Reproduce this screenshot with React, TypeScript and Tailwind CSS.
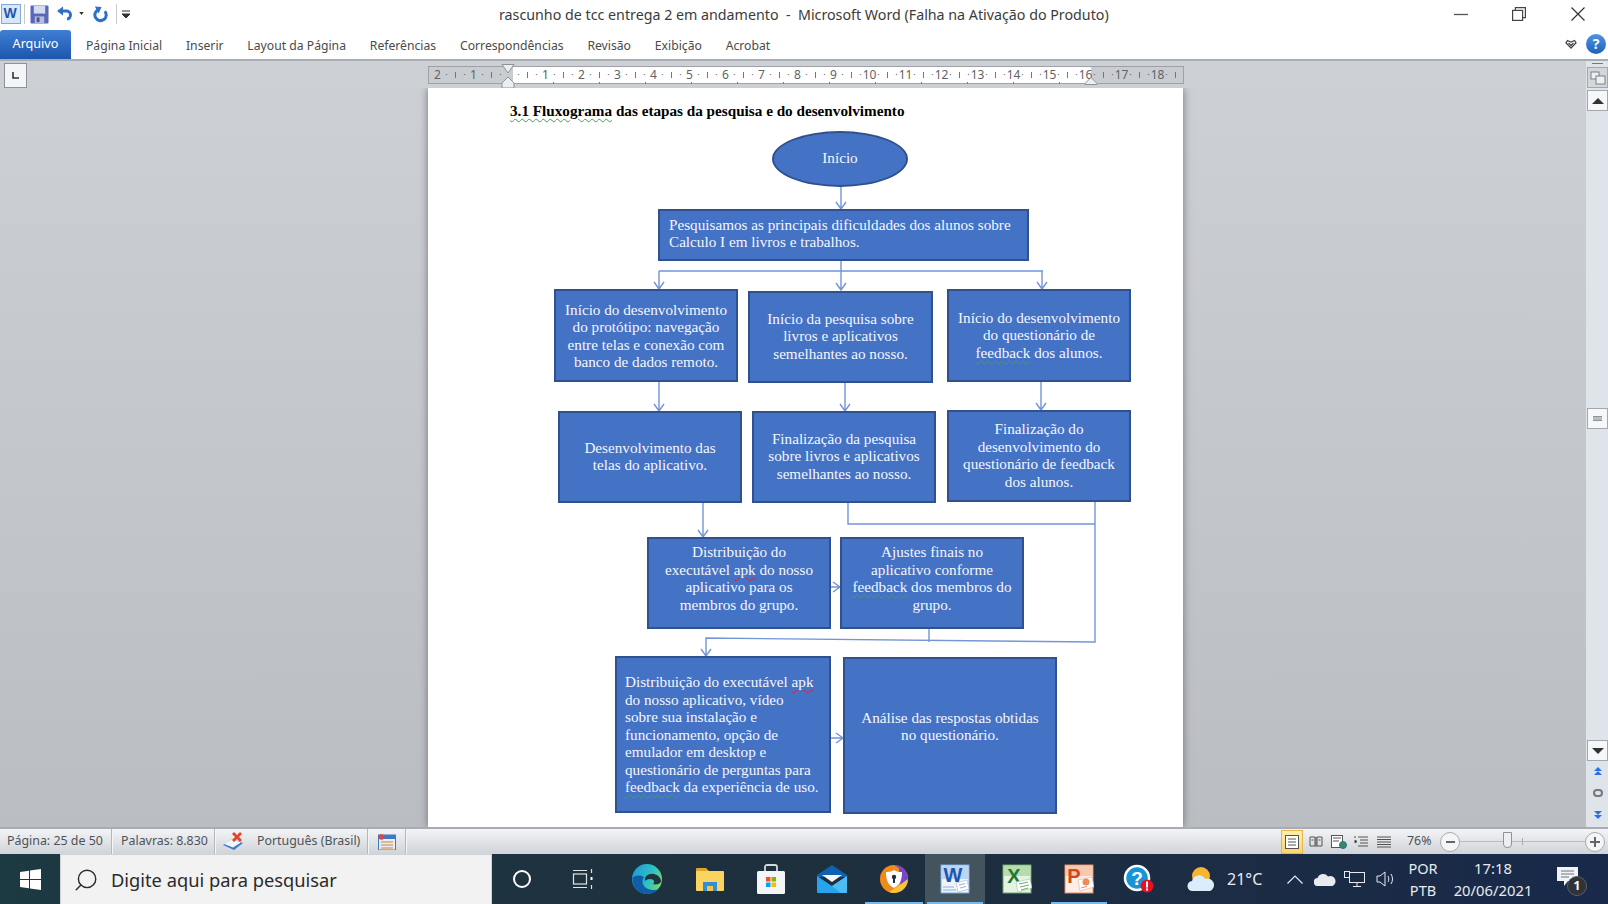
import type { ReactNode } from "react";
import { Search } from "lucide-react";

const uiFont = "font-['Noto_Sans',sans-serif]";

const tabs = ["Página Inicial", "Inserir", "Layout da Página", "Referências", "Correspondências", "Revisão", "Exibição", "Acrobat"];
const rulerLabels = ["2", "1", "", "1", "2", "3", "4", "5", "6", "7", "8", "9", "10", "11", "12", "13", "14", "15", "16", "17", "18"];
const tabStops = [0, 1, 2, 3, 4, 5, 6, 7, 8, 9, 10, 11];

function WordIcon() {
  return (
    <svg viewBox="0 0 30 30" className="w-[30px] h-[30px]">
      <rect x="1" y="1" width="28" height="28" fill="#eef4fb" stroke="#7ba6dc" />
      <rect x="2" y="2" width="26" height="13" fill="#bcd5f2" />
      <text x="13" y="18" textAnchor="middle" fontSize="20" fontWeight="700" fill="#1f56ad" fontFamily="Liberation Sans, sans-serif">W</text>
      <path d="M16 19l11-3 2 9-11 3z" fill="#fff" stroke="#9db4d0" strokeWidth="0.6" />
      <path d="M3 23h11M3 26h13M19 21l6-1.500M20 24l6-1.500" stroke="#7b9ccb" strokeWidth="0.8" />
    </svg>
  );
}

function ExcelIcon() {
  return (
    <svg viewBox="0 0 30 30" className="w-[30px] h-[30px]">
      <rect x="1" y="1" width="28" height="28" fill="#e6f3e2" stroke="#66a65c" />
      <rect x="2" y="2" width="26" height="10" fill="#b7dcae" />
      <text x="12" y="19" textAnchor="middle" fontSize="20" fontWeight="700" fill="#1d7a37" fontFamily="Liberation Sans, sans-serif">X</text>
      <path d="M14 18l14-3 2 9-14 4z" fill="#fff" stroke="#9cc297" strokeWidth="0.6" />
      <path d="M17 20l9-2M18 23l9-2M19 26l7-2" stroke="#5da463" strokeWidth="0.9" />
    </svg>
  );
}

function PowerPointIcon() {
  return (
    <svg viewBox="0 0 30 30" className="w-[30px] h-[30px]">
      <rect x="1" y="1" width="28" height="28" fill="#fdeee6" stroke="#e98a5e" />
      <rect x="2" y="2" width="26" height="10" fill="#f9c8ad" />
      <text x="10" y="19" textAnchor="middle" fontSize="20" fontWeight="700" fill="#d2471c" fontFamily="Liberation Sans, sans-serif">P</text>
      <path d="M14 16l14-3 2 10-14 4z" fill="#fff" stroke="#d8ab95" strokeWidth="0.6" />
      <circle cx="22" cy="18" r="3.500" fill="#ef8b55" />
      <path d="M17 24l6-1.500" stroke="#e48e62" strokeWidth="1" />
    </svg>
  );
}

function EdgeIcon() {
  return (
    <svg viewBox="0 0 32 32" className="w-[32px] h-[32px]">
      <defs>
        <linearGradient id="edgeTop" x1="0" y1="0.2" x2="1" y2="0.6">
          <stop offset="0" stopColor="#1b9bd7" />
          <stop offset="0.6" stopColor="#2fc0c4" />
          <stop offset="1" stopColor="#6edb6a" />
        </linearGradient>
      </defs>
      <circle cx="16" cy="16" r="15" fill="url(#edgeTop)" />
      <path d="M1.500 15C1 25 8 31 16 31c5 0 9-2 12-5-5 2-12 1-15-3-2-3-2-6 0-9-4-2-8-2-11.500 1z" fill="#0f5fa8" />
      <path d="M14 18c-1-5 4-8 9-7 4 1 7 4 7 7 0 3-5 4-8 3 2-2 1-5-3-5-3 0-4 1-5 2z" fill="#1e3440" />
    </svg>
  );
}

function FolderIcon() {
  return (
    <svg viewBox="0 0 30 26" className="w-[30px] h-[26px]">
      <path d="M1 3a1 1 0 0 1 1-1h9l3 3v4H1z" fill="#e0a526" />
      <rect x="1" y="5" width="28" height="20" rx="1" fill="#fbd460" />
      <path d="M8 25v-9h14v9h-4v-5h-6v5z" fill="#2f8fdc" />
      <rect x="12" y="20" width="6" height="5" fill="#f6c445" />
    </svg>
  );
}

function StoreIcon() {
  return (
    <svg viewBox="0 0 30 32" className="w-[30px] h-[32px]">
      <path d="M9 10V4a2 2 0 0 1 2-2h8a2 2 0 0 1 2 2v6" fill="none" stroke="#d5d8da" strokeWidth="1.800" />
      <rect x="1" y="8" width="28" height="23" rx="1.500" fill="#f4f5f6" />
      <rect x="10" y="14" width="4.500" height="4.500" fill="#f25022" />
      <rect x="15.500" y="14" width="4.500" height="4.500" fill="#7fba00" />
      <rect x="10" y="19.500" width="4.500" height="4.500" fill="#00a4ef" />
      <rect x="15.500" y="19.500" width="4.500" height="4.500" fill="#ffb900" />
    </svg>
  );
}

function MailIcon() {
  return (
    <svg viewBox="0 0 32 30" className="w-[32px] h-[30px]">
      <path d="M1 11 16 1l15 10v2H1z" fill="#0f62b0" />
      <path d="M6 11h20l-10 7z" fill="#f4f6f8" />
      <path d="M1 12l15 10 15-10v16a1 1 0 0 1-1 1H2a1 1 0 0 1-1-1z" fill="#27a5ec" />
      <path d="M16 22l15-10v16a1 1 0 0 1-1 1h-5z" fill="#4dbcf2" />
    </svg>
  );
}

function AvastIcon() {
  return (
    <svg viewBox="0 0 30 30" className="w-[30px] h-[30px]">
      <circle cx="15" cy="15" r="14" fill="#f18a1c" />
      <path d="M15 1a14 14 0 0 1 14 14c0 4-2 8-5 10l-4-8V4z" fill="#7a45c8" />
      <path d="M29 15a14 14 0 0 1-19 13l8-5z" fill="#f5c63a" />
      <path d="M15 6c3 2 6 2 8 2 0 8-2 13-8 16-6-3-8-8-8-16 2 0 5 0 8-2z" fill="#fff" />
      <circle cx="15" cy="13" r="2.200" fill="#2e2e3a" />
      <rect x="14" y="14" width="2" height="5" fill="#2e2e3a" />
    </svg>
  );
}

function HelpAlertIcon() {
  return (
    <svg viewBox="0 0 32 30" className="w-[32px] h-[30px]">
      <circle cx="14" cy="14" r="12" fill="#1794d8" stroke="#fff" strokeWidth="2.500" />
      <text x="14" y="21" textAnchor="middle" fontSize="19" fontWeight="700" fill="#fff" fontFamily="Liberation Sans, sans-serif">?</text>
      <circle cx="24" cy="22" r="6.500" fill="#e81123" />
      <rect x="23" y="17.500" width="2" height="6" fill="#fff" />
      <rect x="23" y="24.500" width="2" height="2" fill="#fff" />
    </svg>
  );
}

function WeatherIcon() {
  return (
    <svg viewBox="0 0 28 26" className="w-[28px] h-[26px]">
      <circle cx="14" cy="10" r="9" fill="#f6b52e" />
      <path d="M6 25a5 5 0 0 1-1-10 7 7 0 0 1 13-2 6 6 0 0 1 5 12z" fill="#d9edfb" />
    </svg>
  );
}

function Node({ className, children }: { className: string; children: ReactNode }) {
  return (
    <div className={`absolute flex flex-col justify-center bg-[#4472c4] border-2 border-[#2f528f] text-[#f4f7fd] text-[15.200px] leading-[17.5px] ${className}`}>
      {children}
    </div>
  );
}

function Green({ children }: { children: ReactNode }) {
  return <span className="underline decoration-wavy decoration-[#3fa34d] decoration-1 underline-offset-2">{children}</span>;
}

function Red({ children }: { children: ReactNode }) {
  return <span className="underline decoration-wavy decoration-[#d9233a] decoration-1 underline-offset-2">{children}</span>;
}

function Connectors() {
  const lines = [
    "M413 98V121M408 114l5 7 5-7",
    "M413 172V202M408 195l5 7 5-7",
    "M231 183H615",
    "M231 183V201M226 194l5 7 5-7",
    "M614 183V201M609 194l5 7 5-7",
    "M231 294V323M226 316l5 7 5-7",
    "M417 295V323M412 316l5 7 5-7",
    "M613 294V322M608 315l5 7 5-7",
    "M275 415V449M270 442l5 7 5-7",
    "M420 415V436H667",
    "M667 414V554L278 550V568M273 561l5 7 5-7",
    "M501 541V554",
    "M403 499H412M405 494l7 5-7 5",
    "M403 650H415M408 645l7 5-7 5",
  ];
  return (
    <svg className="absolute inset-0 w-full h-full pointer-events-none" fill="none" stroke="#7395da" strokeWidth="1.400">
      {lines.map((d) => (
        <path key={d} d={d} />
      ))}
    </svg>
  );
}

function Flowchart() {
  return (
    <div className="relative w-[755px] h-[739px] shrink-0 bg-white font-['Liberation_Serif',serif] shadow-[0_0_8px_#6f7277]">
      <p className="absolute left-[82px] top-[14px] text-[15.200px] leading-[18px] font-bold text-black whitespace-nowrap">
        <Green>3.1 Fluxograma</Green> das etapas da pesquisa e do desenvolvimento
      </p>
      <Connectors />
      <Node className="left-[344px] top-[43px] w-[136px] h-[56px] pb-[2px] rounded-[50%] items-center text-center">Início</Node>
      <Node className="left-[230px] top-[121px] w-[371px] h-[52px] pl-[9px] pb-[4px]">
        <p>Pesquisamos as principais dificuldades dos alunos sobre</p>
        <p>Calculo I em livros e trabalhos.</p>
      </Node>

      <Node className="left-[126px] top-[201px] w-[184px] h-[93px] text-center">
        <p>Início do desenvolvimento</p>
        <p>do protótipo: navegação</p>
        <p>entre telas e conexão com</p>
        <p>banco de dados remoto.</p>
      </Node>
      <Node className="left-[320px] top-[203px] w-[185px] h-[92px] pb-[2px] text-center">
        <p>Início da pesquisa sobre</p>
        <p>livros e aplicativos</p>
        <p>semelhantes ao nosso.</p>
      </Node>
      <Node className="left-[519px] top-[201px] w-[184px] h-[93px] pb-[1px] text-center">
        <p>Início do desenvolvimento</p>
        <p>do questionário de</p>
        <p><Green>feedback</Green> dos alunos.</p>
      </Node>

      <Node className="left-[130px] top-[323px] w-[184px] h-[92px] pb-[2px] text-center">
        <p>Desenvolvimento das</p>
        <p>telas do aplicativo.</p>
      </Node>
      <Node className="left-[324px] top-[323px] w-[184px] h-[92px] pb-[2px] text-center">
        <p>Finalização da pesquisa</p>
        <p>sobre livros e aplicativos</p>
        <p>semelhantes ao nosso.</p>
      </Node>
      <Node className="left-[519px] top-[322px] w-[184px] h-[92px] pb-[2px] text-center">
        <p>Finalização do</p>
        <p>desenvolvimento do</p>
        <p>questionário de feedback</p>
        <p>dos alunos.</p>
      </Node>

      <Node className="left-[219px] top-[449px] w-[184px] h-[92px] pb-[10px] text-center">
        <p>Distribuição do</p>
        <p>executável <Red>apk</Red> do nosso</p>
        <p>aplicativo para os</p>
        <p>membros do grupo.</p>
      </Node>
      <Node className="left-[412px] top-[449px] w-[184px] h-[92px] pb-[10px] text-center">
        <p>Ajustes finais no</p>
        <p>aplicativo conforme</p>
        <p><Green>feedback</Green> dos membros do</p>
        <p>grupo.</p>
      </Node>

      <Node className="left-[187px] top-[568px] w-[216px] h-[157px] pl-[8px] whitespace-nowrap">
        <p>Distribuição do executável <Red>apk</Red></p>
        <p>do nosso aplicativo, vídeo</p>
        <p>sobre sua instalação e</p>
        <p>funcionamento, opção de</p>
        <p>emulador em desktop e</p>
        <p>questionário de perguntas para</p>
        <p><Green>feedback</Green> da experiência de uso.</p>
      </Node>
      <Node className="left-[415px] top-[569px] w-[214px] h-[157px] pb-[19px] text-center">
        <p>Análise das respostas obtidas</p>
        <p>no questionário.</p>
      </Node>
    </div>
  );
}

function TitleBar() {
  return (
    <div className="relative flex items-center h-[28px] shrink-0 bg-white">
      <svg viewBox="0 0 20 20" className="w-[20px] h-[20px] ml-[1px]">
        <rect x="0.500" y="0.500" width="19" height="19" fill="#d8e7f8" stroke="#82a9dc" />
        <text x="9" y="14" textAnchor="middle" fontSize="14" fontWeight="700" fill="#1f56ad" fontFamily="Liberation Sans, sans-serif">W</text>
      </svg>
      <div className="w-px h-[20px] bg-[#c8c8c8] ml-[3px]" />
      <svg viewBox="0 0 20 20" className="w-[19px] h-[19px] ml-[5px]">
        <rect x="0.500" y="0.500" width="19" height="19" rx="1" fill="#5a67b8" />
        <rect x="4" y="1" width="12" height="8" fill="#d5dcf2" />
        <rect x="5" y="12" width="10" height="7" fill="#b7bfd8" />
        <rect x="7" y="13" width="3" height="5" fill="#4a5490" />
      </svg>
      {/* desfazer */}
      <svg viewBox="0 0 16 16" className="w-[16px] h-[16px] ml-[8px]">
        <path d="M5 5h4a4 4 0 0 1 1 8" fill="none" stroke="#2f6fc6" strokeWidth="3" />
        <path d="M0 5l6-4.500v9z" fill="#2f6fc6" />
      </svg>
      <svg viewBox="0 0 6 4" className="w-[5px] h-[3px] ml-[6px] mt-[-2px]"><path d="M0 0h6L3 4z" fill="#333" /></svg>
      {/* refazer */}
      <svg viewBox="0 0 18 18" className="w-[17px] h-[17px] ml-[9px]">
        <path d="M12.500 5.500A6 6 0 1 1 5.500 4" fill="none" stroke="#2f6fc6" strokeWidth="3.200" />
        <path d="M2 .5 9 1 6 8z" fill="#2f6fc6" />
      </svg>
      <div className="w-px h-[20px] bg-[#c8c8c8] ml-[6px]" />
      <svg viewBox="0 0 8 8" className="w-[8px] h-[8px] ml-[5px]">
        <path d="M0 1h8M0 4h8L4 8z" stroke="#333" strokeWidth="1" fill="#333" />
      </svg>
      <span className={`absolute left-[499px] top-[5px] text-[14.250px] leading-[20px] text-[#3b3b3b] whitespace-pre ${uiFont}`}>
        rascunho de tcc entrega 2 em andamento  -  Microsoft Word (Falha na Ativação do Produto)
      </span>
      <div className="ml-auto flex items-center">
        <svg viewBox="0 0 14 14" className="w-[14px] h-[14px] mr-[44px]"><path d="M0 7.500h14" stroke="#555" strokeWidth="1.300" /></svg>
        <svg viewBox="0 0 14 14" className="w-[14px] h-[14px] mr-[45px]" fill="none" stroke="#444" strokeWidth="1.200">
          <rect x="0.600" y="3.400" width="10" height="10" />
          <path d="M3.400 3.400V.6h10v10h-2.800" />
        </svg>
        <svg viewBox="0 0 14 14" className="w-[14px] h-[14px] mr-[23px]" fill="none" stroke="#333" strokeWidth="1.200">
          <path d="M.5.5l13 13M13.500.5l-13 13" />
        </svg>
      </div>
    </div>
  );
}

function RibbonTabs() {
  return (
    <div className={`flex items-stretch h-[33px] shrink-0 bg-white border-b-2 border-[#a9adb3] ${uiFont}`}>
      <div className="mt-[2px] w-[71px] rounded-t-[3px] bg-gradient-to-b from-[#3f7fd3] to-[#1d56ad] flex items-center justify-center text-[12.600px] text-white">
        Arquivo
      </div>
      <div className="flex items-center gap-[23.800px] pl-[15px] pt-[5px] text-[12.200px] text-[#4a4a4a] whitespace-nowrap">
        {tabs.map((t) => (
          <span key={t}>{t}</span>
        ))}
      </div>
      <div className="ml-auto flex items-center pr-[2px]">
        <svg viewBox="0 0 12 10" className="w-[12px] h-[10px] mr-[9px]" fill="none" stroke="#444" strokeWidth="1.300">
          <path d="M6 9 1 4 2.500 1.500 6 3 9.500 1.500 11 4z" />
          <path d="M3.500 4 6 6.500 8.500 4" />
        </svg>
        <div className="w-[20px] h-[20px] rounded-full bg-gradient-to-b from-[#4f95e3] to-[#1e62b8] flex items-center justify-center text-[14px] font-bold text-white">?</div>
      </div>
    </div>
  );
}

function Ruler() {
  return (
    <div className="flex h-[27px] shrink-0 pt-[1px]">
      <div className="ml-[4px] mt-[1px] w-[23px] h-[25px] border border-[#8f9398] bg-[#f4f5f6] flex items-center justify-center">
        <svg viewBox="0 0 9 9" className="w-[9px] h-[9px]"><path d="M2 1v6h6" fill="none" stroke="#333" strokeWidth="1.600" /></svg>
      </div>
      <div className="relative ml-[401px] mt-[4px] w-[756px] h-[18px]">
        <div className={`w-full h-full border border-[#9ea2a7] overflow-hidden flex pl-[4px] text-[12px] leading-[16px] text-[#5f6368] bg-[linear-gradient(to_right,#c9cdd2_84px,#fff_84px,#fff_662px,#c9cdd2_662px)] ${uiFont}`}>
          {rulerLabels.map((label, i) => (
            <div key={i} className="grid grid-cols-4 w-[36px] shrink-0 text-center items-center">
              <span className="justify-self-center whitespace-nowrap">{label}</span>
              <span className="text-[9px]">·</span>
              <span className="w-px h-[6px] bg-[#777] justify-self-center" />
              {i < rulerLabels.length - 1 && <span className="text-[9px]">·</span>}
            </div>
          ))}
        </div>
        <div className="absolute left-[125px] bottom-0 flex gap-[45px]">
          {tabStops.map((i) => (
            <span key={i} className="w-px h-[2px] bg-[#777]" />
          ))}
        </div>
        {/* recuos da régua */}
        <svg viewBox="0 0 16 25" className="absolute left-[72px] top-[-2px] w-[16px] h-[25px]" fill="#eceef0" stroke="#8f9398">
          <path d="M2 .5h12L8 9z" />
          <path d="M8 13l6 6v5H2v-5z" />
        </svg>
        <svg viewBox="0 0 16 8" className="absolute left-[655px] top-[11px] w-[16px] h-[8px]" fill="#eceef0" stroke="#8f9398">
          <path d="M8 .5l6 6v1H2v-1z" />
        </svg>
      </div>
    </div>
  );
}

function Scrollbar() {
  const btn = "w-[21px] border border-[#a4a8ad] bg-[#f6f7f9] flex items-center justify-center";
  return (
    <div className="w-[22px] shrink-0 bg-[#dfe3ea] flex flex-col items-end">
      <div className="w-[11px] h-[1px] bg-[#777] mt-[2px] mr-[5px]" />
      <div className="w-[21px] h-[21px] mt-[3px] border border-[#a4a8ad] bg-[#d3d6db] flex items-center justify-center">
        <svg viewBox="0 0 16 14" className="w-[16px] h-[14px]" fill="#eeeff1" stroke="#71757a" strokeWidth="0.900">
          <rect x="1" y="1" width="8" height="7" />
          <rect x="6" y="5" width="9" height="8" />
        </svg>
      </div>
      <div className={`${btn} h-[21px] mt-[2px]`}>
        <svg viewBox="0 0 12 6" className="w-[12px] h-[6px]"><path d="M0 6 6 0l6 6z" fill="#333" /></svg>
      </div>
      <div className={`${btn} h-[21px] mt-[297px]`}>
        <div className="w-[9px] h-[5px] bg-[#b8bbbf] border-y border-[#8f9398]" />
      </div>
      <div className={`${btn} h-[21px] mt-[311px]`}>
        <svg viewBox="0 0 12 6" className="w-[12px] h-[6px]"><path d="M0 0h12L6 6z" fill="#333" /></svg>
      </div>
      <div className="w-[21px] flex flex-col items-center gap-[14px] mt-[6px]">
        <svg viewBox="0 0 8 8" className="w-[8px] h-[8px]" fill="#2b6fe6"><path d="M0 4 4 0l4 4zM0 8l4-4 4 4z" /></svg>
        <div className="w-[10px] h-[8px] rounded-full border-2 border-[#777]" />
        <svg viewBox="0 0 8 8" className="w-[8px] h-[8px]" fill="#2b6fe6"><path d="M0 0h8L4 4zM0 4h8L4 8z" /></svg>
      </div>
    </div>
  );
}

function StatusSep() {
  return <div className="w-px self-stretch bg-[#b4b7bc] border-r border-[#f4f5f6] box-content" />;
}

function StatusBar() {
  return (
    <div className={`flex items-center h-[27px] shrink-0 border-t-2 border-[#a9adb3] bg-gradient-to-b from-[#f3f4f6] to-[#d0d3d8] text-[12.400px] text-[#4f5358] ${uiFont}`}>
      <span className="ml-[7px] w-[104px]">Página: 25 de 50</span>
      <StatusSep />
      <span className="ml-[8px] w-[93px]">Palavras: 8.830</span>
      <StatusSep />
      {/* revisão de texto */}
      <svg viewBox="0 0 22 20" className="ml-[6px] w-[22px] h-[20px]">
        <path d="M1 13l9-6 11 4-9 7z" fill="#3a7bd0" />
        <path d="M2 12l8-5 9 3.500-8 5z" fill="#f1f4f8" />
        <path d="M11 1l8 8M19 1l-8 8" stroke="#e4432d" strokeWidth="2.800" />
      </svg>
      <span className="ml-[13px] w-[110px]">Português (Brasil)</span>
      <StatusSep />
      <svg viewBox="0 0 18 16" className="ml-[9px] w-[18px] h-[16px]">
        <rect x="0.500" y="1" width="17" height="15" fill="#e8eef7" stroke="#3e79c6" />
        <rect x="0.500" y="1" width="17" height="4" fill="#3e79c6" />
        <circle cx="3.500" cy="3" r="2.800" fill="#e0443a" />
        <path d="M3 8h12M3 11h12M3 14h12" stroke="#d0842c" strokeWidth="1.200" />
      </svg>
      <div className="ml-[9px] self-stretch flex"><StatusSep /></div>
      <div className="ml-auto flex items-center">
        <div className="w-[22px] h-[24px] border border-[#e5b64e] bg-gradient-to-b from-[#fdeeaa] to-[#fbd66a] flex items-center justify-center">
          <svg viewBox="0 0 14 14" className="w-[14px] h-[14px]" fill="#fff" stroke="#555" strokeWidth="1"><rect x=".5" y=".5" width="13" height="13" /><path d="M3 4h8M3 7h8M3 10h8" /></svg>
        </div>
        <svg viewBox="0 0 14 14" className="ml-[6px] w-[14px] h-[14px]" fill="none" stroke="#555"><path d="M7 2v10M1 2h5v9H1zM8 2h5v9H8zM2.500 5h2M9.500 5h2" /></svg>
        <svg viewBox="0 0 16 14" className="ml-[8px] w-[16px] h-[14px]" fill="none" stroke="#555"><rect x=".5" y=".5" width="11" height="12" fill="#fff" /><path d="M2 3h8M2 6h6" /><circle cx="12" cy="10" r="3.500" fill="#3a8a5a" stroke="#2a6fb5" /></svg>
        <svg viewBox="0 0 14 12" className="ml-[7px] w-[14px] h-[12px]" stroke="#555"><path d="M4 1h10M6 4h8M1 4l2 1.500L1 7zM6 7h8M4 10h10M0 1h2" /></svg>
        <svg viewBox="0 0 14 12" className="ml-[9px] w-[14px] h-[12px]" stroke="#555"><path d="M0 1h14M0 3.500h14M0 6h14M0 8.500h14M0 11h14" /></svg>
        <span className="ml-[16px] w-[28px] whitespace-nowrap">76%</span>
        <div className="ml-[5px] w-[20px] h-[20px] rounded-full border border-[#a7abb0] bg-[#f4f5f6] flex items-center justify-center">
          <div className="w-[9px] h-[2px] bg-[#666]" />
        </div>
        <div className="relative w-[125px] h-px bg-[#b8bbc0]">
          <div className="absolute left-[62px] top-[-3px] w-px h-[7px] bg-[#a7abb0]" />
          <div className="absolute left-[43px] top-[-9px] w-[9px] h-[16px] bg-[#eceef0] border border-[#8f9398] rounded-b-[4px]" />
        </div>
        <div className="mr-[3px] w-[20px] h-[20px] rounded-full border border-[#a7abb0] bg-[#f4f5f6] flex items-center justify-center">
          <svg viewBox="0 0 10 10" className="w-[10px] h-[10px]"><path d="M5 0v10M0 5h10" stroke="#666" strokeWidth="2" /></svg>
        </div>
      </div>
    </div>
  );
}

function TaskSlot({ className, active, running, children }: { className: string; active?: boolean; running?: boolean; children: ReactNode }) {
  return (
    <div className={`relative h-full flex items-center justify-center ${className} ${active ? "bg-[#44545f]" : ""}`}>
      {children}
      {running && <span className="absolute left-[2px] right-[2px] bottom-0 h-[2px] bg-[#76b9ed]" />}
    </div>
  );
}

function Taskbar() {
  return (
    <div className={`flex items-center h-[50px] shrink-0 bg-gradient-to-r from-[#1c3a42] via-[#1e2f3d] to-[#19294a] text-[#e7eaee] ${uiFont}`}>
      <div className="w-[60px] h-full flex items-center justify-center">
        <svg viewBox="0 0 21 21" className="w-[21px] h-[21px]" fill="#fff">
          <path d="M0 3l9-1.300V10H0zM10 1.500 21 0v10H10zM0 11h9v8.300L0 18zM10 11h11v10l-11-1.500z" />
        </svg>
      </div>
      <div className="w-[432px] h-full border-t border-x border-[#cfd2d6] bg-[#f2f2f2] flex items-center text-[#2b2b2b] text-[18.300px]">
        <Search className="ml-[12px] w-[26px] h-[26px] -scale-x-100" strokeWidth={1.300} />
        <span className="ml-[12px]">Digite aqui para pesquisar</span>
      </div>
      <TaskSlot className="w-[60px]"><div className="w-[18px] h-[18px] rounded-full border-2 border-white" /></TaskSlot>
      <TaskSlot className="w-[62px]">
        <svg viewBox="0 0 22 22" className="w-[22px] h-[22px]" fill="none" stroke="#dfe3e6" strokeWidth="1.200">
          <rect x="1.500" y="6" width="13" height="10" />
          <path d="M1 2.500h14M1 19.500h14M19.500 1v4M19.500 17v4" />
          <rect x="18.500" y="9" width="2" height="3" fill="#fff" stroke="none" />
        </svg>
      </TaskSlot>
      <TaskSlot className="w-[66px]"><EdgeIcon /></TaskSlot>
      <TaskSlot className="w-[60px]"><FolderIcon /></TaskSlot>
      <TaskSlot className="w-[61px]"><StoreIcon /></TaskSlot>
      <TaskSlot className="w-[62px]"><MailIcon /></TaskSlot>
      <TaskSlot className="w-[62px]" running><AvastIcon /></TaskSlot>
      <TaskSlot className="w-[60px]" active running><WordIcon /></TaskSlot>
      <TaskSlot className="w-[64px]"><ExcelIcon /></TaskSlot>
      <TaskSlot className="w-[60px]" running><PowerPointIcon /></TaskSlot>
      <TaskSlot className="w-[59px]"><HelpAlertIcon /></TaskSlot>
      <div className="ml-[19px]"><WeatherIcon /></div>
      <span className="ml-[12px] w-[40px] text-[16px]">21°C</span>
      <svg viewBox="0 0 16 9" className="ml-[20px] w-[16px] h-[9px]" fill="none" stroke="#e7eaee" strokeWidth="1.200"><path d="M.5 8.500 8 1l7.500 7.500" /></svg>
      <svg viewBox="0 0 22 13" className="ml-[11px] w-[22px] h-[13px]" fill="#e7eaee"><path d="M4 13a4 4 0 0 1-.5-8A6 6 0 0 1 14 3.500 4.800 4.800 0 0 1 18.500 13z" /></svg>
      <svg viewBox="0 0 21 17" className="ml-[8px] w-[21px] h-[17px]" fill="none" stroke="#e7eaee" strokeWidth="1">
        <rect x="5.500" y="1.500" width="15" height="10" />
        <rect x=".5" y=".5" width="5" height="6" fill="#1b2c45" />
        <path d="M13 12v3M9 15.500h8" />
      </svg>
      <svg viewBox="0 0 20 16" className="ml-[11px] w-[20px] h-[16px]" fill="none" stroke="#e7eaee" strokeWidth="1">
        <path d="M1 5h3l5-4v14l-5-4H1zM12 5c1 1.500 1 4.500 0 6M15 3c2 3 2 7 0 10" />
      </svg>
      <div className="ml-[9px] w-[36px] flex flex-col items-center text-[14.500px] leading-[22px]">
        <span>POR</span>
        <span>PTB</span>
      </div>
      <div className="ml-[4px] w-[96px] flex flex-col items-center text-[14.800px] leading-[22px]">
        <span>17:18</span>
        <span>20/06/2021</span>
      </div>
      <div className="relative ml-[16px] w-[24px] h-[24px]">
        <svg viewBox="0 0 21 19" className="w-[21px] h-[19px]">
          <path d="M0 0h21v14H11l-4 5v-5H0z" fill="#f1f3f5" />
          <path d="M4 4h13M4 7h13M4 10h8" stroke="#6a7480" strokeWidth="1" />
        </svg>
        <span className="absolute left-[10px] top-[9px] w-[20px] h-[20px] rounded-full bg-[#2f3338] border border-[#5a6068] flex items-center justify-center text-[12px] font-bold text-white">1</span>
      </div>
    </div>
  );
}

export default function App() {
  return (
    <div className="w-[1608px] h-[904px] flex flex-col overflow-hidden bg-white">
      <TitleBar />
      <RibbonTabs />
      <div className="flex flex-1 min-h-0">
        <div className="flex-1 min-w-0 flex flex-col bg-gradient-to-b from-[#cdd0d5] to-[#babdc2]">
          <Ruler />
          <div className="flex-1 min-h-0 pl-[428px] overflow-hidden">
            <Flowchart />
          </div>
        </div>
        <Scrollbar />
      </div>
      <StatusBar />
      <Taskbar />
    </div>
  );
}
